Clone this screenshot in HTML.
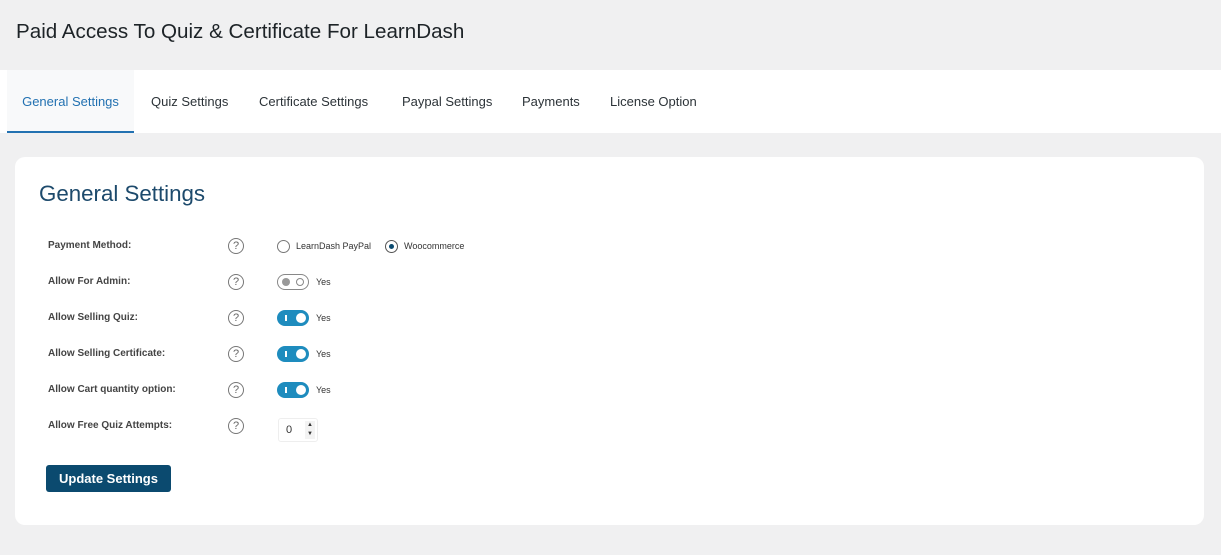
<!DOCTYPE html>
<html><head><meta charset="utf-8"><style>
*{box-sizing:border-box;margin:0;padding:0}
body{width:1221px;height:555px;background:#f0f0f1;font-family:"Liberation Sans",sans-serif;position:relative;overflow:hidden;color:#1d2327}
.h1{position:absolute;left:16px;top:20px;font-size:20.6px;color:#1d2327}
.tabs{position:absolute;left:0;top:70px;width:1221px;height:63px;background:#fff}
.tab{position:absolute;top:0;height:63px;line-height:63px;font-size:13px;color:#2c3338}
.tab.act{background:#f8f9fa;color:#2271b1;border-bottom:2px solid #2271b1}
.card{position:absolute;left:15px;top:157px;width:1189px;height:368px;background:#fff;border-radius:10px}
.ttl{position:absolute;left:39px;top:181px;font-size:22.3px;color:#1d4a6c}
.lbl{position:absolute;left:48px;font-size:10px;font-weight:bold;color:#444}
.q{position:absolute;left:228px;width:16px;height:16px;border:1px solid #777;border-radius:50%;font-size:11px;line-height:14px;text-align:center;color:#666}
.tg{position:absolute;left:277px;width:32px;height:16px;border-radius:8px;background:#1e8cbe}
.tg::after{content:"";position:absolute;right:3px;top:3px;width:10px;height:10px;border-radius:50%;background:#fff}
.tg::before{content:"";position:absolute;left:8px;top:5px;width:1.5px;height:6px;background:#fff}
.tg.off{background:#fff;border:1px solid #888}
.tg.off::after{left:4px;right:auto;top:3px;width:8px;height:8px;background:#999}
.tg.off::before{left:auto;right:4px;top:3px;width:6px;height:6px;border:1px solid #888;border-radius:50%;background:#fff}
.yes{position:absolute;left:316px;font-size:9px;color:#333}
.btn{position:absolute;left:46px;top:465px;width:125px;height:27px;background:#0b4a6f;border-radius:3px;color:#fff;font-weight:bold;font-size:13px;line-height:27px;text-align:center}
</style></head><body>
<div class="h1">Paid Access To Quiz &amp; Certificate For LearnDash</div>
<div class="tabs">
<div class="tab act" style="left:7px;width:127px;text-align:center">General Settings</div>
<div class="tab" style="left:151px">Quiz Settings</div>
<div class="tab" style="left:259px">Certificate Settings</div>
<div class="tab" style="left:402px">Paypal Settings</div>
<div class="tab" style="left:522px">Payments</div>
<div class="tab" style="left:610px">License Option</div>
</div>
<div class="card"></div>
<div class="ttl">General Settings</div>

<div class="lbl" style="top:240px">Payment Method:</div><div class="q" style="top:238px">?</div>
<div style="position:absolute;left:277px;top:240px;width:13px;height:13px;border:1px solid #777;border-radius:50%"></div>
<div class="yes" style="top:241px;left:296px">LearnDash PayPal</div>
<div style="position:absolute;left:385px;top:240px;width:13px;height:13px;border:1px solid #555;border-radius:50%"><div style="margin:3px;width:5px;height:5px;border-radius:50%;background:#0b4a6f"></div></div>
<div class="yes" style="top:241px;left:404px">Woocommerce</div>

<div class="lbl" style="top:276px">Allow For Admin:</div><div class="q" style="top:274px">?</div>
<div class="tg off" style="top:274px"></div><div class="yes" style="top:277px">Yes</div>

<div class="lbl" style="top:312px">Allow Selling Quiz:</div><div class="q" style="top:310px">?</div>
<div class="tg" style="top:310px"></div><div class="yes" style="top:313px">Yes</div>

<div class="lbl" style="top:348px">Allow Selling Certificate:</div><div class="q" style="top:346px">?</div>
<div class="tg" style="top:346px"></div><div class="yes" style="top:349px">Yes</div>

<div class="lbl" style="top:384px">Allow Cart quantity option:</div><div class="q" style="top:382px">?</div>
<div class="tg" style="top:382px"></div><div class="yes" style="top:385px">Yes</div>

<div class="lbl" style="top:420px">Allow Free Quiz Attempts:</div><div class="q" style="top:418px">?</div>
<div style="position:absolute;left:278px;top:418px;width:40px;height:24px;border:1px solid #eee;border-radius:3px;font-size:11px;line-height:22px;padding-left:7px;color:#333">0<span style="position:absolute;right:2px;top:2px;width:10px;height:18px;background:#f3f3f3;font-size:6px;line-height:9px;text-align:center">▲<br>▼</span></div>

<div class="btn">Update Settings</div>
</body></html>
